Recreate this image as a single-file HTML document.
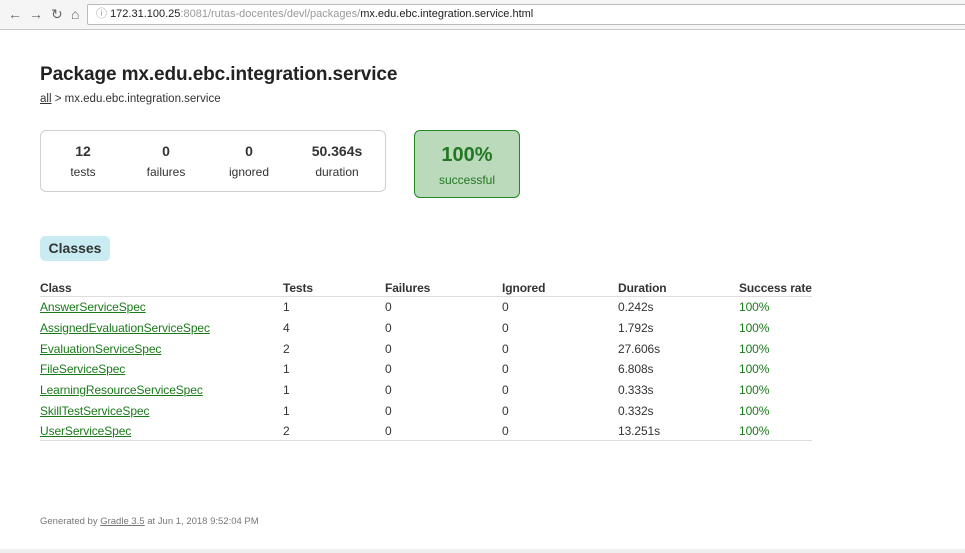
<!DOCTYPE html>
<html><head><meta charset="utf-8"><style>
*{margin:0;padding:0;box-sizing:border-box}
body{width:965px;height:553px;background:#fff;font-family:"Liberation Sans",Arial,sans-serif;color:#333;position:relative;overflow:hidden}
.a{position:absolute;white-space:nowrap}
.bar{position:absolute;left:0;top:0;width:965px;height:30px;background:#f5f5f5;border-bottom:1px solid #c8c8c8}
.url{position:absolute;left:87px;top:4px;width:880px;height:21px;background:#fff;border:1px solid #bbb;border-radius:2px;font-size:11px;line-height:19px;padding-left:8px;color:#999}
.url b{font-weight:normal;color:#222}
.nav{position:absolute;top:7px;font-size:14px;color:#666;line-height:14px}
h1{position:absolute;left:40px;top:64px;font-size:19px;font-weight:bold;color:#222;white-space:nowrap;letter-spacing:-0.1px}
.bc{left:40px;top:93px;font-size:11.5px}
.bc u{color:#333}
.sum{position:absolute;left:40px;top:130px;width:346px;height:62px;border:1px solid #d0d0d0;border-radius:6px}
.n{position:absolute;width:80px;text-align:center;font-size:14px;font-weight:bold;top:143px}
.l{position:absolute;width:80px;text-align:center;font-size:12px;top:165px}
.succ{position:absolute;left:414px;top:130px;width:106px;height:68px;background:#bbd9bb;border:1px solid #228822;border-radius:6px;color:#227722;text-align:center}
.cls{position:absolute;left:40px;top:236px;width:70px;height:25px;background:#c8ecf2;border-radius:5px;font-size:14px;font-weight:bold;line-height:25px;text-align:center;color:#333}
.row{position:absolute;left:40px;width:772px;font-size:12px;letter-spacing:-0.1px}
.row span{position:absolute;top:0;white-space:nowrap}
.g{color:#1a7a1a}
a{color:#1a7a1a;text-decoration:underline}
</style></head><body>
<div class="bar">
<span class="nav" style="left:8px">←</span><span class="nav" style="left:29px">→</span><span class="nav" style="left:51px">↻</span><span class="nav" style="left:71px">⌂</span>
<div class="url">ⓘ <b>172.31.100.25</b>:8081/rutas-docentes/devl/packages/<b>mx.edu.ebc.integration.service.html</b></div>
</div>
<h1>Package mx.edu.ebc.integration.service</h1>
<div class="a bc"><u>all</u> &gt; mx.edu.ebc.integration.service</div>
<div class="sum"></div>
<div class="n" style="left:43px">12</div><div class="l" style="left:43px">tests</div>
<div class="n" style="left:126px">0</div><div class="l" style="left:126px">failures</div>
<div class="n" style="left:209px">0</div><div class="l" style="left:209px">ignored</div>
<div class="n" style="left:297px">50.364s</div><div class="l" style="left:297px">duration</div>
<div class="succ"><div style="font-size:20px;font-weight:bold;margin-top:13px">100%</div><div style="font-size:12px;margin-top:6px">successful</div></div>
<div class="cls">Classes</div>
<div class="row" style="top:281px;font-weight:bold;height:16px;border-bottom:1px solid #ddd"><span style="left:0">Class</span><span style="left:243px">Tests</span><span style="left:345px">Failures</span><span style="left:462px">Ignored</span><span style="left:578px">Duration</span><span style="left:699px">Success rate</span></div>
<div class="row" style="top:300px"><span style="left:0"><a>AnswerServiceSpec</a></span><span style="left:243px">1</span><span style="left:345px">0</span><span style="left:462px">0</span><span style="left:578px">0.242s</span><span class="g" style="left:699px">100%</span></div>
<div class="row" style="top:321px"><span style="left:0"><a>AssignedEvaluationServiceSpec</a></span><span style="left:243px">4</span><span style="left:345px">0</span><span style="left:462px">0</span><span style="left:578px">1.792s</span><span class="g" style="left:699px">100%</span></div>
<div class="row" style="top:342px"><span style="left:0"><a>EvaluationServiceSpec</a></span><span style="left:243px">2</span><span style="left:345px">0</span><span style="left:462px">0</span><span style="left:578px">27.606s</span><span class="g" style="left:699px">100%</span></div>
<div class="row" style="top:362px"><span style="left:0"><a>FileServiceSpec</a></span><span style="left:243px">1</span><span style="left:345px">0</span><span style="left:462px">0</span><span style="left:578px">6.808s</span><span class="g" style="left:699px">100%</span></div>
<div class="row" style="top:383px"><span style="left:0"><a>LearningResourceServiceSpec</a></span><span style="left:243px">1</span><span style="left:345px">0</span><span style="left:462px">0</span><span style="left:578px">0.333s</span><span class="g" style="left:699px">100%</span></div>
<div class="row" style="top:404px"><span style="left:0"><a>SkillTestServiceSpec</a></span><span style="left:243px">1</span><span style="left:345px">0</span><span style="left:462px">0</span><span style="left:578px">0.332s</span><span class="g" style="left:699px">100%</span></div>
<div class="row" style="top:424px;height:17px;border-bottom:1px solid #ddd"><span style="left:0"><a>UserServiceSpec</a></span><span style="left:243px">2</span><span style="left:345px">0</span><span style="left:462px">0</span><span style="left:578px">13.251s</span><span class="g" style="left:699px">100%</span></div>
<div class="a" style="left:40px;top:516px;font-size:9.5px;color:#777">Generated by <u>Gradle 3.5</u> at Jun 1, 2018 9:52:04 PM</div>
<div class="a" style="left:0;top:549px;width:965px;height:4px;background:#eee"></div>
</body></html>
